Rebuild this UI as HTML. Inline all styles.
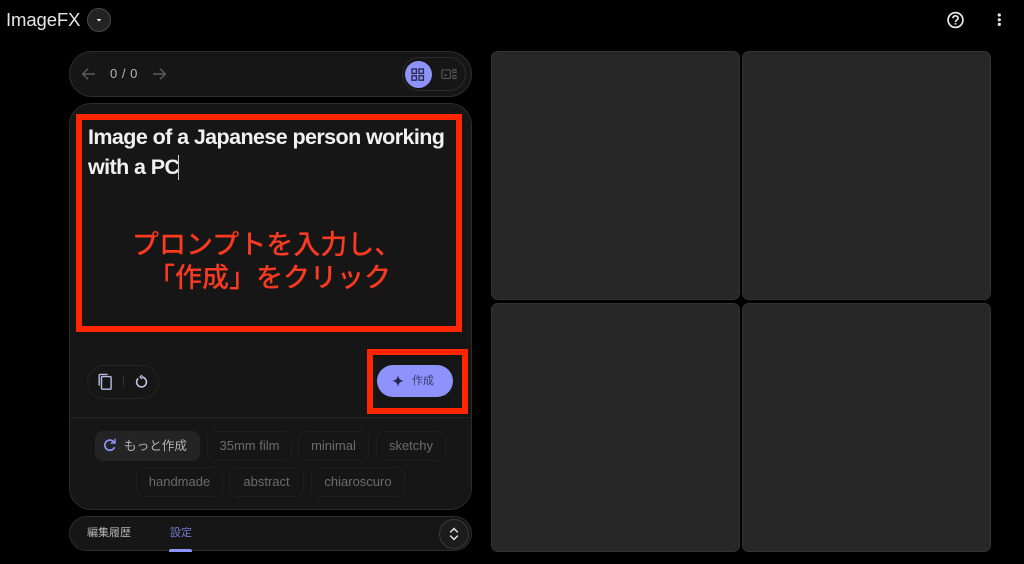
<!DOCTYPE html>
<html><head><meta charset="utf-8">
<style>
html,body{margin:0;padding:0;background:#000;width:1024px;height:564px;overflow:hidden}
body{position:relative;font-family:"Liberation Sans","Noto Sans CJK JP",sans-serif}
.a{position:absolute;box-sizing:border-box}
.t{position:absolute;white-space:nowrap}
.cell{position:absolute;box-sizing:border-box;background:#272727;border:1px solid #333;border-radius:7px;width:249px;height:249px}
.chip{position:absolute;box-sizing:border-box;height:30px;border:1px solid #1f1f1f;border-radius:8px;color:#6b6b6b;font-size:13px;line-height:28px;text-align:center;white-space:nowrap}
.jp{position:absolute;white-space:nowrap;font-family:"Noto Sans CJK JP",sans-serif;font-size:27px;line-height:34px;font-weight:500;color:#ff3a20}
svg{position:absolute;overflow:visible}
</style></head><body>

<div class="t" style="left:6px;top:8px;font-size:18.5px;line-height:24px;color:#e6e6e6;letter-spacing:-.1px">ImageFX</div>
<div class="a" style="left:87px;top:8px;width:24px;height:24px;border-radius:50%;background:#222;border:1px solid #4a4a4a"></div>
<svg style="left:87px;top:8px" width="24" height="24"><path d="M9.600 11h4.800L12 13.600z" fill="#e8e8e8"/></svg>

<svg style="left:946px;top:10px" width="20" height="20" fill="none" stroke="#eaeaea" stroke-width="1.700"><circle cx="9.500" cy="10" r="7.400"/><path d="M7 8.200c0-1.500 1.100-2.400 2.500-2.400s2.500.9 2.500 2.300c0 1.900-2.500 1.900-2.500 3.900"/><path d="M9.500 13.100v1.500"/></svg>
<svg style="left:990px;top:10px" width="20" height="20" fill="#eaeaea"><circle cx="9.300" cy="5" r="1.600"/><circle cx="9.300" cy="9.800" r="1.600"/><circle cx="9.300" cy="14.400" r="1.600"/></svg>

<!-- top bar -->
<div class="a" style="left:69px;top:51px;width:403px;height:46px;border-radius:23px;background:#161616;border:1px solid #2c2c2c"></div>
<svg style="left:80px;top:65px" width="18" height="18" fill="none" stroke="#5c5c5c" stroke-width="1.400"><path d="M15 9H2.600M8 3.700L2.700 9 8 14.300"/></svg>
<div class="t" style="left:110px;top:66px;font-size:13px;line-height:16px;color:#b5b5b5;letter-spacing:.5px">0 / 0</div>
<svg style="left:151px;top:65px" width="18" height="18" fill="none" stroke="#5c5c5c" stroke-width="1.400"><path d="M2 9h12.400M9 3.700L14.300 9 9 14.300"/></svg>
<div class="a" style="left:402px;top:57px;width:64px;height:34px;border-radius:17px;border:1px solid #2c2c2c"></div>
<div class="a" style="left:405px;top:61px;width:27px;height:27px;border-radius:50%;background:#8e92fb"></div>
<svg style="left:411px;top:68px" width="14" height="14" fill="none" stroke="#2a2c52" stroke-width="1.400"><rect x="1" y="1" width="4.400" height="4.400"/><rect x="8" y="1" width="4.400" height="4.400"/><rect x="1" y="7.800" width="4.400" height="4.400"/><rect x="8" y="7.800" width="4.400" height="4.400"/></svg>
<svg style="left:441px;top:68px" width="16" height="14" fill="none" stroke="#565656" stroke-width="1.100"><rect x=".8" y="2" width="8.600" height="8.400" rx="1"/><rect x="12" y="1.600" width="3" height="3"/><rect x="12" y="7.600" width="3" height="3"/><path d="M3 8l1.500-1.500L6 8"/></svg>

<!-- main panel -->
<div class="a" style="left:69px;top:103px;width:403px;height:407px;border-radius:22px;background:#161616;border:1px solid #2c2c2c"></div>
<div class="a" style="left:70px;top:417px;width:401px;height:1px;background:#222"></div>

<div class="t" style="left:88px;top:122px;font-size:21.500px;line-height:30px;font-weight:700;color:#f1f1f1;letter-spacing:-.59px">Image of a Japanese person working<br>with a PC</div>
<div class="a" style="left:178px;top:155px;width:1px;height:25px;background:#ccc"></div>

<div class="a" style="left:76px;top:114px;width:386px;height:218px;border:6px solid #ff2600"></div>
<div class="jp" style="left:132px;top:226px">プロンプトを入力し、</div>
<div class="jp" style="left:148px;top:259px">「作成」をクリック</div>

<!-- actions -->
<div class="a" style="left:87px;top:365px;width:72px;height:34px;border-radius:17px;border:1px solid #242424"></div>
<svg style="left:97px;top:373px" width="18" height="18" fill="none" stroke="#b9bde6" stroke-width="1.400"><rect x="4.500" y="3.600" width="9.600" height="12.600" rx="1"/><path d="M2.200 12.600V2.400c0-.6.4-1 1-1h7.400"/></svg>
<div class="a" style="left:123px;top:376px;width:1px;height:11px;background:#333"></div>
<svg style="left:133px;top:373px" width="17" height="17" fill="none" stroke="#c4c7ea" stroke-width="1.600"><path d="M5.200 5.400a4.900 4.900 0 1 0 3.500-1.300"/><path d="M9 2L7 4l2 2" stroke-width="1.200"/></svg>

<div class="a" style="left:367px;top:349px;width:101px;height:65px;border:6px solid #ff2600"></div>
<div class="a" style="left:377px;top:365px;width:76px;height:32px;border-radius:16px;background:#8e92fb"></div>
<svg style="left:391px;top:374px" width="14" height="14"><path d="M7 1.300C7.700 4.900 9.100 6.300 12.600 7 9.100 7.700 7.700 9.100 7 12.700 6.300 9.100 4.900 7.700 1.400 7 4.900 6.300 6.300 4.900 7 1.300z" fill="#26284c"/></svg>
<div class="t" style="left:412px;top:374px;font-size:11px;line-height:15px;color:#3a3c6e">作成</div>

<!-- chips -->
<div class="chip" style="left:95px;top:431px;width:105px;background:#242424;border-color:#242424;color:#b3b3b3;text-align:left;padding-left:28px;font-size:12.600px">もっと作成</div>
<svg style="left:102px;top:437px" width="16" height="16" fill="none" stroke="#8e92fb" stroke-width="1.700"><path d="M12.600 10.200A5.100 5.100 0 1 1 12 5.100"/><path d="M13 1.800v4.200H8.800" stroke-width="1.500"/></svg>
<div class="chip" style="left:207px;top:431px;width:85px">35mm film</div>
<div class="chip" style="left:298px;top:431px;width:71px">minimal</div>
<div class="chip" style="left:376px;top:431px;width:70px">sketchy</div>
<div class="chip" style="left:136px;top:467px;width:87px">handmade</div>
<div class="chip" style="left:229px;top:467px;width:75px">abstract</div>
<div class="chip" style="left:311px;top:467px;width:94px">chiaroscuro</div>

<!-- bottom bar -->
<div class="a" style="left:69px;top:516px;width:403px;height:35px;border-radius:17.500px;background:#161616;border:1px solid #2c2c2c"></div>
<div class="t" style="left:87px;top:526px;font-size:11px;line-height:15px;color:#b4b4b4">編集履歴</div>
<div class="t" style="left:170px;top:526px;font-size:11px;line-height:15px;color:#7478cc">設定</div>
<div class="a" style="left:169px;top:549px;width:23px;height:3px;border-radius:2px 2px 0 0;background:#8e92fb"></div>
<div class="a" style="left:439px;top:519px;width:30px;height:30px;border-radius:50%;background:#1c1c1c;border:1px solid #3a3a3a"></div>
<svg style="left:439px;top:519px" width="30" height="30" fill="none" stroke="#e0e0e0" stroke-width="1.500"><path d="M11.200 13.400L15 9.600l3.800 3.800M11.200 16.600L15 20.400l3.800-3.800"/></svg>

<!-- grid -->
<div class="cell" style="left:491px;top:51px"></div>
<div class="cell" style="left:742px;top:51px"></div>
<div class="cell" style="left:491px;top:303px"></div>
<div class="cell" style="left:742px;top:303px"></div>
</body></html>
